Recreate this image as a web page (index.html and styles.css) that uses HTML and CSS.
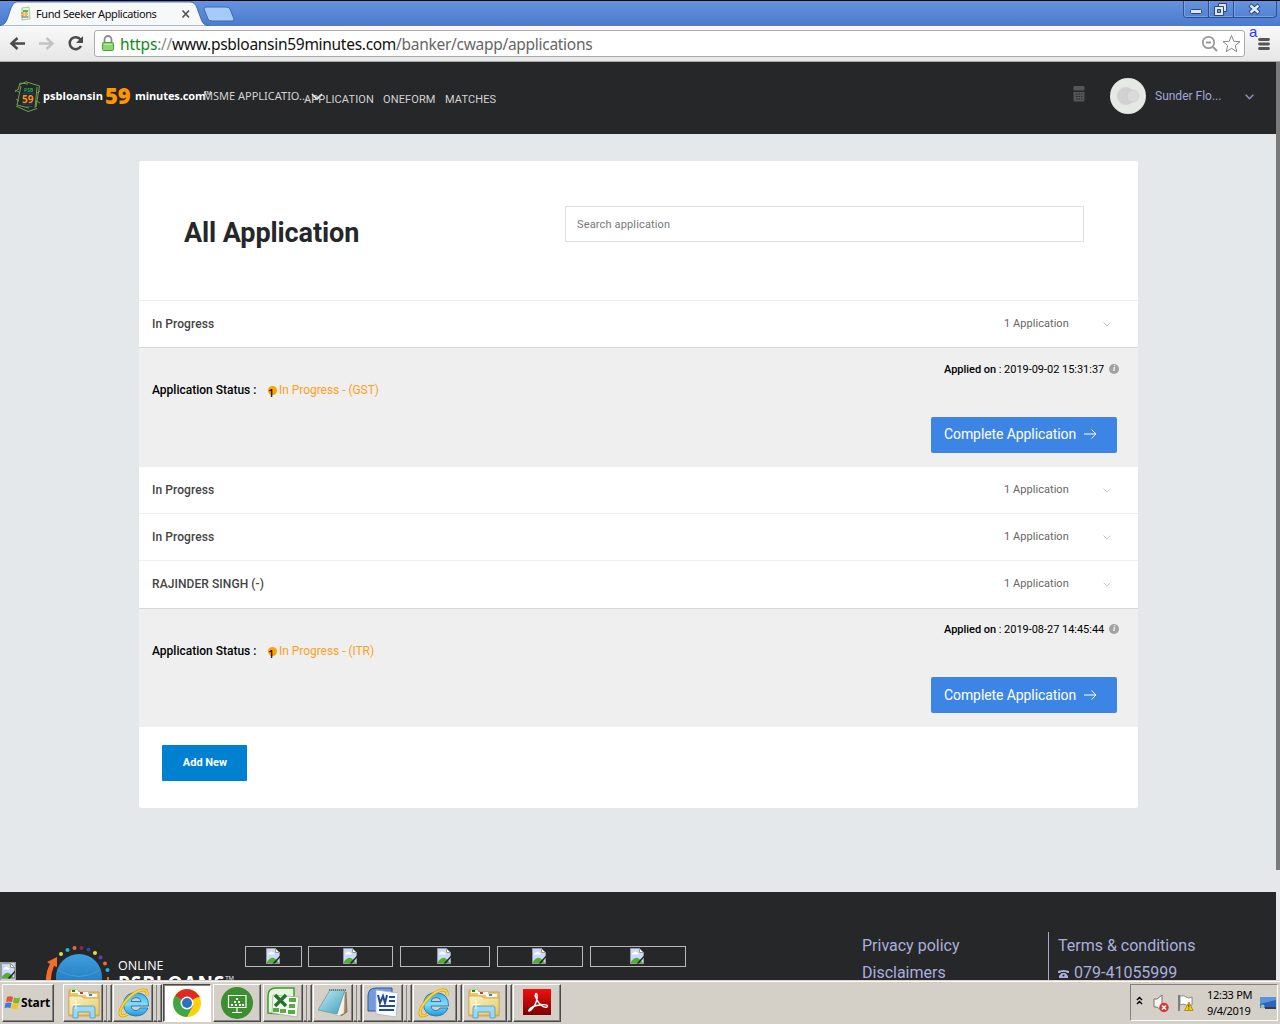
FILE: index.html
```html
<!DOCTYPE html>
<html lang="en">
<head>
<meta charset="utf-8">
<title>Fund Seeker Applications</title>
<link rel="stylesheet" href="styles.css">
</head>
<body>
<svg class="defs" width="0" height="0">
  <defs>
    <linearGradient id="folderFill" x1="0" y1="0" x2="1" y2="1"><stop offset="0" stop-color="#fdf3c0"/><stop offset="1" stop-color="#e9c868"/></linearGradient>
    <linearGradient id="ieFill" x1="0" y1="0" x2="0" y2="1"><stop offset="0" stop-color="#3faee6"/><stop offset=".5" stop-color="#82dcfb"/><stop offset="1" stop-color="#2494d8"/></linearGradient>
    <linearGradient id="padFill" x1="0" y1="0" x2="1" y2="1"><stop offset="0" stop-color="#c8eef4"/><stop offset="1" stop-color="#3c9ebc"/></linearGradient>
    <linearGradient id="redFill" x1="0" y1="0" x2="0" y2="1"><stop offset="0" stop-color="#f50f0f"/><stop offset="1" stop-color="#7c0000"/></linearGradient>
    <linearGradient id="globeFill" x1="0" y1="0" x2="0" y2="1"><stop offset="0" stop-color="#3d9fe0"/><stop offset="1" stop-color="#1b68ac"/></linearGradient>
    <symbol id="broken" viewBox="0 0 14 16">
      <path d="M.5.5H9.500L13.500 4.500V15.500H.5z" fill="#c9dafa" stroke="#9a9a9a"/>
      <path d="M9.500.5V4.500H13.500z" fill="#fff" stroke="#9a9a9a"/>
      <path d="M2 6.500q0-2 2-2 1-2 3 0 2 0 1.500 2z" fill="#fff"/>
      <path d="M1 15v-1.500q5-6.500 9-2l3 3.500z" fill="#54ad35"/>
      <path d="M14 7.500V9.500L9 15.500H6.500z" fill="#252729"/>
    </symbol>
    <symbol id="explorer" viewBox="0 0 34 32">
      <path d="M2 4q0-1 1-1h8l2 2h19v24H2z" fill="#eac66d" stroke="#c39a3b" stroke-width=".7"/>
      <path d="M4 3h7v3H4z" fill="#fff"/><path d="M5 3h3v2H5z" fill="#0b9a20"/>
      <path d="M11 5h10v3H11z" fill="#fff"/><path d="M13 5h3v2h-3z" fill="#d63a1e"/>
      <path d="M19 7h11v3H19z" fill="#fff"/><path d="M22 7h3v2h-3z" fill="#138bea"/>
      <path d="M2 9h12l3 2h15v17H2z" fill="url(#folderFill)" stroke="#c8a040" stroke-width=".7"/>
      <path d="M6 31V21q0-2 2-2h18q2 0 2 2v10h-5v-6H11v6z" fill="#9ed8f0" stroke="#489bc3" stroke-width=".8"/>
      <path d="M9 13v9M4.500 17.500h9" stroke="#fff" stroke-width=".9"/>
    </symbol>
    <symbol id="ie" viewBox="0 0 34 32">
      <path d="M31 21q-3 8-12.500 8Q7 28 6.500 17.500 7 6 19 5.500 32 6.500 31.500 19H14q.5 4.500 5 4.500 3 0 4-2.500zM14 14.500h10q-.5-4-5-4T14 14.500z" fill="url(#ieFill)" stroke="#1876b8" stroke-width=".9" fill-rule="evenodd"/>
      <path d="M30 8.500Q31 1 23 3.500C14 6 3 19 3 26q0 5 8 1" fill="none" stroke="#c89005" stroke-width="2.800"/>
      <path d="M30 8.500Q31 1 23 3.500C14 6 3 19 3 26q0 5 8 1" fill="none" stroke="#ffd62e" stroke-width="1.900"/>
    </symbol>
  </defs>
</svg>

<div class="screen">
  <div class="titlebar">
    <svg class="tabs" width="240" height="26" viewBox="0 0 240 26">
      <path d="M0 25.500C6 25 7 20 10 11Q12.500 2 17 2H190Q195 2 197 8L201 19Q203 25.500 209 26H0z" fill="#f7f8f8" stroke="#345da7" stroke-width=".8"/>
      <path d="M204 9q-.5-2 2-2h20q3 0 4 2l4 10q.8 2-2 2h-20q-3 0-4-2z" fill="#a6cbf7" stroke="#3c69b5"/>
      <path d="M22 8l7-1 1 12-8 1z" fill="#edf4dc" stroke="#93b36b" stroke-width=".7"/>
      <path d="M23 11h5" stroke="#25a05b" stroke-width="1.500"/><path d="M21.500 17h7" stroke="#4661ab"/>
      <path d="M182.500 10.500l6.500 7m0-7l-6.500 7" stroke="#555" stroke-width="1.700"/>
    </svg>
    <span class="fav-num">59</span>
    <span class="tab-title">Fund Seeker Applications</span>
    <svg class="win-controls" width="94" height="20" viewBox="0 0 94 20">
      <path d="M.5 0v14q0 2.500 3 2.500h87q3 0 3-2.500V0M25.500 0v16M50.500 0v16" fill="none" stroke="#2f5090"/>
      <path d="M1.500 0v14q0 1.500 2 1.500H24.500M26.500 0v15.500H49.500M51.500 0v15.500H90" fill="none" stroke="#86aae4" stroke-width=".7"/>
      <rect x="7.500" y="8.500" width="11" height="4" rx="1" fill="#dce7f7" stroke="#2b4778"/>
      <path d="M35.500 2.500h8v8h-8z" fill="#dce7f7" stroke="#2b4778"/>
      <path d="M31.500 5.500h9v9h-9z" fill="#dce7f7" stroke="#2b4778"/><path d="M34.500 8.500h3v3h-3z" fill="#6e98da" stroke="#2b4778"/>
      <path d="M67 4l9 8m0-8l-9 8" stroke="#2b4778" stroke-width="4.400"/><path d="M67.500 4.500l8 7m0-7l-8 7" stroke="#e4edf9" stroke-width="2.400"/>
    </svg>
  </div>

  <div class="toolbar">
    <svg class="nav-icons" width="94" height="34" viewBox="0 0 94 34">
      <path d="M25 17.500H12M17.500 12l-6 5.500 6 5.500" fill="none" stroke="#4b4b4b" stroke-width="2.500"/>
      <path d="M39 17.500h13M46.500 12l6 5.500-6 5.500" fill="none" stroke="#c4c4c4" stroke-width="2.500"/>
      <path d="M80.500 13.500a6 6 0 1 0 .5 6.500" fill="none" stroke="#4b4b4b" stroke-width="2.500"/><path d="M83 10v7h-7z" fill="#4b4b4b"/>
    </svg>
    <div class="address">
      <svg width="12" height="17" viewBox="0 0 12 17"><path d="M2.500 8V4.500a3.500 3.500 0 0 1 7 0V8" fill="none" stroke="#8b8b8b" stroke-width="1.800"/><rect x=".5" y="7.500" width="11" height="8" rx="1" fill="#8bd76d" stroke="#4aa13a"/><path d="M2 9.500h8" stroke="#b8efa1"/></svg>
      <span class="url"><b>https</b><i>://</i>www.psbloansin59minutes.com<em>/banker/cwapp/applications</em></span>
      <svg width="40" height="20" viewBox="0 0 40 20"><circle cx="7.500" cy="8.500" r="5.700" fill="none" stroke="#999" stroke-width="1.700"/><path d="M5 8.500h5M12 13l4 4" stroke="#999" stroke-width="2"/><path d="M30.500 1.500l2.300 5.800 6.200.3-4.700 4 1.500 6.100-5.300-3.400-5.300 3.400 1.500-6.100-4.700-4 6.200-.3z" fill="#fff" stroke="#888"/></svg>
    </div>
    <svg class="menu" width="14" height="14" viewBox="0 0 14 14"><path d="M2.500 2.500h9M2.500 7h9M2.500 11.500h9" stroke="#555" stroke-width="2.800" stroke-linecap="round"/></svg>
    <span class="ext-a">a</span>
  </div>

  <div class="viewport">
    <div class="page">
      <header class="site-header">
        <svg class="brand-mark" width="27" height="32" viewBox="0 0 27 32">
          <path d="M5 4L12 .8 25.500 5 22 26M4 9l2-7 8 1M2 25l12 5.500 9-3M7 5L3 24l12 3M23 6l-2 21" fill="none" stroke="#6fa350"/>
          <path d="M1 9l4 2M1 11l3-3M22 20l4 2M23 12l3-2M2 18l3 2" stroke="#83a969" stroke-width=".8"/>
          <path d="M8 12.500h12M8 23h11" stroke="#27357c" stroke-width="1.500"/><path d="M11 25.500h7" stroke="#1b693a"/>
        </svg>
        <span class="mark-psb">PSB</span><span class="mark-num">59</span>
        <span class="brand"><span class="b1">psbloansin</span><span class="b59">59</span><span class="b2">minutes.com</span></span>
        <nav class="main-nav">
          <span class="tm">TM</span>
          <span class="msme">MSME APPLICATIO...</span>
          <svg class="nav-caret" width="12" height="8" viewBox="0 0 12 8"><path d="M1 1l5 5 5-5" fill="none" stroke="#fff" stroke-width="1.600"/></svg>
          <span class="n1">APPLICATION</span><span class="n2">ONEFORM</span><span class="n3">MATCHES</span>
        </nav>
        <svg class="calc" width="12" height="16" viewBox="0 0 12 16"><rect width="11" height="4.500" x=".5" rx="1" fill="#555657"/><path d="M.5 6h11v8q0 1.500-1.500 1.500H2Q.5 15.500.5 14z" fill="#555657"/><path d="M3 8h1.500M5.500 8H7M8 8h1.500M3 10.500h1.500M5.500 10.500H7M8 10.500h1.500M3 13h1.500M5.500 13H7M8 13h1.500" stroke="#252729" stroke-width="1.200"/></svg>
        <svg class="avatar" width="36" height="36" viewBox="0 0 36 36"><circle cx="18" cy="18" r="18" fill="#e6e8e6"/><circle cx="16" cy="18" r="9" fill="#d1d1d1"/><circle cx="23" cy="18" r="6" fill="#dadada" stroke="#c8c8c8" stroke-width=".6"/></svg>
        <span class="user">Sunder Flo...</span>
        <svg class="user-caret" width="9" height="6" viewBox="0 0 9 6"><path d="M.7.700l3.800 4 3.800-4" fill="none" stroke="#9090b8" stroke-width="1.500"/></svg>
      </header>

      <main class="content">
        <section class="card">
          <div class="card-head">
            <h1>All Application</h1>
            <div class="search">Search application</div>
          </div>
          <div class="row first"><strong>In Progress</strong><span class="count">1 Application</span><svg width="8" height="5" viewBox="0 0 8 5"><path d="M.5.500L4 4 7.500.500" fill="none" stroke="#c4c4c4"/></svg></div>
          <div class="detail">
            <div class="status"><strong>Application Status :</strong><span class="dot"><span>1</span></span><span class="state">In Progress - (GST)</span></div>
            <div class="side">
              <div class="applied"><strong>Applied on</strong> : 2019-09-02 15:31:37<span class="info">i</span></div>
              <div class="complete"><span>Complete Application</span><svg width="13" height="12" viewBox="0 0 13 12"><path d="M0 6h12M7.500 1.500L12 6 7.500 10.500" fill="none" stroke="#fff"/></svg></div>
            </div>
          </div>
          <div class="row next"><strong>In Progress</strong><span class="count">1 Application</span><svg width="8" height="5" viewBox="0 0 8 5"><path d="M.5.500L4 4 7.500.500" fill="none" stroke="#ccc"/></svg></div>
          <div class="row lined"><strong>In Progress</strong><span class="count">1 Application</span><svg width="8" height="5" viewBox="0 0 8 5"><path d="M.5.500L4 4 7.500.500" fill="none" stroke="#ccc"/></svg></div>
          <div class="row lined"><strong>RAJINDER SINGH (-)</strong><span class="count">1 Application</span><svg width="8" height="5" viewBox="0 0 8 5"><path d="M.5.500L4 4 7.500.500" fill="none" stroke="#ccc"/></svg></div>
          <div class="detail second">
            <div class="status"><strong>Application Status :</strong><span class="dot"><span>1</span></span><span class="state">In Progress - (ITR)</span></div>
            <div class="side">
              <div class="applied"><strong>Applied on</strong> : 2019-08-27 14:45:44<span class="info">i</span></div>
              <div class="complete"><span>Complete Application</span><svg width="13" height="12" viewBox="0 0 13 12"><path d="M0 6h12M7.500 1.500L12 6 7.500 10.500" fill="none" stroke="#fff"/></svg></div>
            </div>
          </div>
          <div class="card-foot"><div class="add">Add New</div></div>
        </section>
      </main>

      <footer class="site-footer">
        <span class="edge-img"><svg width="14" height="16"><use href="#broken"/></svg></span>
        <svg class="globe" width="72" height="40" viewBox="0 0 72 40">
          <circle cx="36" cy="31" r="23" fill="url(#globeFill)"/><path d="M15 24q21 13 42 0" fill="none" stroke="#4a9ad8"/>
          <path d="M3 40Q2 27 7 18L4 16 14 11v10l-3-1Q7 29 8 40z" fill="#f36c2c"/>
          <g><circle cx="18" cy="8" r="2" fill="#d9e04b"/><circle cx="24.500" cy="4" r="2" fill="#26b3e8"/><circle cx="31.500" cy="2" r="2" fill="#f06b2e"/><circle cx="38.500" cy="2" r="2" fill="#98224f"/><circle cx="45.500" cy="3.500" r="2" fill="#2250a5"/><circle cx="52" cy="7" r="2" fill="#fadb20"/><circle cx="57.500" cy="11.500" r="2" fill="#6b3ba0"/><circle cx="62" cy="17.500" r="2" fill="#f06b2e"/><circle cx="64.500" cy="24" r="2" fill="#26b3e8"/><path d="M64 31h2v4h-2z" fill="#f06b2e"/></g>
        </svg>
        <div class="online"><span>ONLINE</span><b>PSBLOANS<sup>TM</sup></b></div>
        <div class="partners">
          <span class="p1"><svg width="14" height="16"><use href="#broken"/></svg></span>
          <span class="p2"><svg width="14" height="16"><use href="#broken"/></svg></span>
          <span class="p3"><svg width="14" height="16"><use href="#broken"/></svg></span>
          <span class="p4"><svg width="14" height="16"><use href="#broken"/></svg></span>
          <span class="p5"><svg width="14" height="16"><use href="#broken"/></svg></span>
        </div>
        <div class="links"><span>Privacy policy</span><span>Disclaimers</span></div>
        <div class="links contact"><span>Terms &amp; conditions</span><span><svg width="11" height="8" viewBox="0 0 11 8"><path d="M0 3V1.500Q1 0 5.500 0T11 1.500V3H8.500V2h-6v1zM3.500 3h4L10 6v2H1V6z" fill="#a9b0dc"/><circle cx="5.500" cy="5.500" r="1" fill="#252729"/></svg>079-41055999</span></div>
      </footer>
    </div>
    <div class="scrollbar"><div class="thumb"></div></div>
  </div>

  <div class="taskbar">
    <div class="start"><svg width="16" height="16" viewBox="0 0 16 16"><path d="M3 2q3-1.500 6 0L8 7Q5 6 2 7z" fill="#e5562a"/><path d="M10 2.500q3 1.500 6 0L15 8q-3 1-6-.5z" fill="#76b82a"/><path d="M1.500 8q3-1 6 0l-1 5q-3-1-6 0z" fill="#3b7dd8"/><path d="M8.500 8.500q3 1.500 6 0l-1 5q-3 1.500-6 0z" fill="#fbc21d"/></svg><span>Start</span></div>
    <div class="task stack"><svg width="34" height="32"><use href="#explorer"/></svg><i></i><i></i></div>
    <div class="task stack"><svg width="34" height="32"><use href="#ie"/></svg><i></i><i></i></div>
    <div class="task active"><svg width="30" height="30" viewBox="0 0 30 30"><circle cx="15" cy="15" r="14" fill="#fdd008"/><path d="M15 15L2.900 8A14 14 0 0 1 27.100 8z" fill="#dc2b20"/><path d="M15 15L2.900 8A14 14 0 0 0 15 29l6-11z" fill="#3fa648"/><path d="M15 8.500H27.400" stroke="#dc2b20" stroke-width="1.500"/><circle cx="15" cy="15" r="6.500" fill="#fff"/><circle cx="15" cy="15" r="5" fill="#2e70bd"/></svg></div>
    <div class="task"><svg width="32" height="32" viewBox="0 0 32 32"><circle cx="16" cy="16" r="16" fill="#3c8f31"/><path d="M7.500 8.500h17.500v12H7.500zM16 20.500v5M11 25.500h10" fill="none" stroke="#fff" stroke-width="1.200"/><path d="M15 11h2v2h-2zM13 14h2v2h-2zM17 14h2v2h-2zM10 17h2v2h-2zM14 17h2v2h-2zM18 17h2v2h-2zM21 17h2v2h-2z" fill="#fff"/></svg></div>
    <div class="task stack"><svg width="34" height="32" viewBox="0 0 34 32"><path d="M1 9q0-8 8-8h18v24q-14 3-26 1z" fill="#e8f5dd" stroke="#3e9c34" stroke-width="1.500"/><path d="M6 8l26 2-2 20-25-4z" fill="#f7fbf4" stroke="#91b586" stroke-width=".7"/><path d="M22 11h7v4h-7zM22 17h6v4h-6zM21 23h7v4h-7zM13 22h6v4h-6zM6 21h6v4H6z" fill="#5ca946"/><path d="M8 8l11 11M19 8L8 19" stroke="#227428" stroke-width="3.500"/></svg><i></i><i></i></div>
    <div class="task stack"><svg width="34" height="32" viewBox="0 0 34 32"><path d="M29 5l1 20-6 4z" fill="#a98553" stroke="#7f6039" stroke-width=".7"/><path d="M28 4l-1 22-5 3-6-2z" fill="#f3f1ea" stroke="#a9a79d" stroke-width=".6"/><path d="M13 3h15L20 27 1 23z" fill="url(#padFill)" stroke="#5b95a4" stroke-width=".7"/><path d="M12 3h17" stroke="#777" stroke-width="2" stroke-dasharray="1 1"/></svg><i></i><i></i></div>
    <div class="task stack"><svg width="34" height="32" viewBox="0 0 34 32"><path d="M1 9q0-8 8-8h16v23H1z" fill="#729bda" stroke="#2d58a0"/><path d="M9 3l22 3-2 24-20-3z" fill="#fafcff" stroke="#a5b7d6" stroke-width=".8"/><path d="M11 8l2 8 3-7 2 7 2-8" fill="none" stroke="#26489b" stroke-width="2"/><path d="M22 10h6M22 14h6M12 19h16M12 23h15" stroke="#26489b" stroke-width="2"/></svg><i></i><i></i></div>
    <div class="task stack double"><svg width="34" height="32"><use href="#ie"/></svg><i></i></div>
    <div class="task stack double"><svg width="34" height="32"><use href="#explorer"/></svg><i></i></div>
    <div class="task"><svg class="pdf" width="28" height="26" viewBox="0 0 28 26"><path d="M0 0h28v26H0z" fill="url(#redFill)"/><path d="M6 22c5-2 9-11 8-16-.5-3-3-1-1 3 3 7 8 10 11 9 2-2-2-3-7-2-5 0-10 3-11 5q-.5 1 0 1z" fill="none" stroke="#fff" stroke-width="1.400"/></svg></div>
    <div class="tray">
      <svg width="52" height="28" viewBox="0 0 52 28"><path d="M0 11l2.500-2.500L5 11M0 15l2.500-2.500L5 15" fill="none" stroke="#000" stroke-width="1.500"/><path d="M17 10h3l5-4v16l-5-4h-3z" fill="#f5f5f5" stroke="#777"/><circle cx="27" cy="18.500" r="4.700" fill="#d93630"/><path d="M25 16.500l4 4m0-4l-4 4" stroke="#fff" stroke-width="1.500"/><path d="M42 6v16" stroke="#777" stroke-width="1.800"/><path d="M43 7q4-1 6 1t6 0v8q-4 2-6 0t-6 0z" fill="#fff" stroke="#777" stroke-width=".8"/><path d="M47.500 21.500L52 13l4 8.500z" fill="#f4d20c" stroke="#b39300"/><path d="M51.800 15.500v3M51.800 19.500v1" stroke="#333"/></svg>
      <div class="clock"><span>12:33 PM</span><span>9/4/2019</span></div>
      <svg class="desk" width="16" height="14" viewBox="0 0 16 14"><path d="M0 1h16v11H0z" fill="#2b65bd"/><path d="M0 1h16v3L0 8z" fill="#5c93dc"/><path d="M5 11h11v2H5z" fill="#3b3f45"/><circle cx="2.500" cy="10.500" r="2" fill="#7ed0f4"/><circle cx="2.500" cy="10.500" r="1" fill="#f19a27"/></svg>
    </div>
  </div>
</div>
</body>
</html>
```
FILE: styles.css
```css
* { box-sizing: border-box; }
body { margin: 0; font-family: Roboto, "Liberation Sans", sans-serif; }
.defs { position: absolute; }
svg { display: block; flex: none; overflow: visible; }
span, h1, .add, .search { white-space: nowrap; }
.screen { width: 1280px; height: 1024px; display: flex; flex-direction: column; overflow: hidden; }

/* Browser frame */
.titlebar { position: relative; flex: none; height: 26px; background: linear-gradient(#6494df, #4b79cc); border-top: 1px solid #000; display: flex; justify-content: space-between; padding-right: 3px; }
.titlebar svg { margin-top: -1px; }
.titlebar .win-controls { margin-top: 0; }
.tab-title { position: absolute; left: 36px; top: 5px; font: 11px/16px "Noto Sans", sans-serif; color: #111; letter-spacing: -.4px; }
.fav-num { position: absolute; left: 21px; top: 10px; font: bold 6px/6px "Open Sans", sans-serif; color: #f5930c; }
.toolbar { position: relative; flex: none; height: 36px; background: linear-gradient(#f9f9f9, #e6e6e6); border-bottom: 1px solid #a9aaaa; display: flex; align-items: flex-start; }
.address { margin-top: 4px; width: 1151px; height: 27px; border: 1px solid #ababab; border-radius: 3px; background: #fff; display: flex; align-items: center; padding: 0 3px 0 7px; }
.url { flex: 1; margin-left: 6px; padding-top: 1px; font: 15.500px/26px "Noto Sans", sans-serif; letter-spacing: -.29px; color: #111; }
.url b { font-weight: 400; color: #118a12; letter-spacing: -.1px; }
.url i, .url em { font-style: normal; color: #8a8a8a; }
.url em { color: #666; }
.menu { margin: 11px 0 0 12px; }
.ext-a { position: absolute; left: 1249px; top: -3px; font: 15px/18px "Liberation Sans", sans-serif; color: #1f36ff; }

/* Web page */
.viewport { flex: none; height: 918px; display: flex; overflow: hidden; }
.page { width: 1276px; background: #e4e8eb; }
.scrollbar { width: 4px; background: #e4e8eb; }
.thumb { height: 808px; background: #7b7b7b; }
.site-header { position: relative; height: 72px; background: #252729; display: flex; align-items: flex-start; }
.brand-mark { margin: 19px 0 0 14px; }
.mark-psb, .mark-num { position: absolute; font: bold 5px/6px "Open Sans", sans-serif; color: #14af3c; left: 24px; top: 25px; }
.mark-num { font-size: 10px; line-height: 10px; color: #ff9500; left: 22px; top: 32px; }
.brand { display: flex; align-items: center; margin: 19px 0 0 2px; width: 165px; height: 30px; font-family: "Open Sans", sans-serif; color: #fff; font-size: 11px; font-weight: 700; line-height: 30px; }
.b1 { width: 62px; letter-spacing: .05px; }
.b59 { width: 30px; padding-bottom: 2px; font-size: 22px; font-weight: 800; color: #ff9500; line-height: 30px; letter-spacing: -.2px; }
.b2 { letter-spacing: -.1px; }
.main-nav { position: relative; width: 300px; height: 72px; color: #d3d3d3; font-size: 11px; line-height: 16px; }
.main-nav > * { position: absolute; top: 29px; }
.main-nav .tm { left: -4px; top: 28px; font: 5px/6px "Open Sans", sans-serif; color: #fff; }
.main-nav .msme { top: 26px; left: -5px; font-family: "Noto Sans", sans-serif; }
.main-nav .nav-caret { left: 103px; top: 31px; }
.main-nav .n1, .main-nav .n2, .main-nav .n3 { top: 30px; letter-spacing: .12px; }
.n1 { left: 96px; } .n2 { left: 175px; } .n3 { left: 237px; }
.calc { margin: 24px 0 0 auto; }
.avatar { margin: 16px 0 0 25px; }
.user { width: 90px; margin: 26px 0 0 9px; font-size: 12px; line-height: 16px; color: #a1a8da; }
.user-caret { margin: 32px 22px 0 0; }

.content { height: 758px; padding: 27px 0 0 139px; }
.card { width: 999px; height: 647px; background: #fff; border-radius: 3px; overflow: hidden; }
.card-head { height: 139px; padding: 45px 54px 0 45px; display: flex; justify-content: space-between; }
h1 { margin: 9px 0 0; font-size: 27px; line-height: 36px; font-weight: 700; color: #252729; letter-spacing: -.1px; }
.search { width: 519px; height: 36px; border: 1px solid #dedfe0; padding: 1px 0 0 11px; font-size: 11px; line-height: 34px; color: #777; letter-spacing: .15px; }
.row { height: 47px; display: flex; align-items: center; padding: 0 27px 0 13px; font-size: 12px; color: #444; }
.row strong { flex: 1; font-weight: 500; letter-spacing: .08px; }
.row.lined, .row.first { border-top: 1px solid #eee; }
.row.next { height: 46px; }
.count { font-size: 11px; width: 99px; padding-bottom: 2px; color: #666; letter-spacing: .05px; }
.detail { height: 120px; background: #efefef; border-top: 1px solid #d5d7d8; display: flex; justify-content: space-between; padding: 14px 19px 0 13px; }
.detail.second { height: 119px; margin: 1px 0 0; padding-top: 13px; }
.status { margin-top: 20px; height: 17px; display: flex; font-size: 12px; line-height: 17px; color: #000; }
.second .status { margin-top: 21px; }
.status strong { width: 116px; font-weight: 500; }
.dot { position: relative; width: 9px; height: 9px; border-radius: 5px; background: #ffa000; margin: 4px 2px 0 0; }
.dot span { position: absolute; left: 0; top: -1px; font: 500 11px/16px "Noto Sans", sans-serif; }
.state { color: #ffa01c; letter-spacing: -.04px; }
.side { width: 188px; }
.applied { margin-left: 13px; font-size: 11px; line-height: 16px; color: #000; white-space: nowrap; letter-spacing: -.03px; }
.applied strong { font-weight: 500; }
.info { display: inline-block; width: 10px; height: 10px; margin-left: 5px; border-radius: 5px; background: #a2a2a2; color: #fff; font: italic bold 8px/10px "Liberation Serif", serif; text-align: center; vertical-align: 2px; }
.complete { width: 186px; height: 36px; margin-top: 39px; border-radius: 2px; background: #3d85e4; color: #fff; font-size: 14px; display: flex; align-items: center; gap: 8px; padding: 0 0 1px 13px; letter-spacing: -.09px; }
.detail:not(.second) .complete { padding-bottom: 2px; }
.card-foot { padding: 18px 23px; }
.add { width: 85px; height: 36px; background: #0080d0; border-radius: 1px; color: #fff; font-size: 11px; font-weight: 700; line-height: 35px; text-align: center; padding-left: 1px; }

.site-footer { height: 88px; background: #252729; display: flex; align-items: flex-start; overflow: hidden; }
.edge-img { width: 16px; height: 19px; margin-top: 70px; border: 1px solid #999; background: #cfcfcf; }
.globe { margin: 54px 0 0 27px; }
.online { width: 120px; margin: 64px 0 0 3px; display: flex; flex-direction: column; font: 12.500px/19px "Open Sans", sans-serif; color: #fff; }
.online b { font-size: 19px; line-height: 24px; margin-top: -4px; letter-spacing: .9px; white-space: nowrap; }
.online sup { font-size: 6px; font-weight: 400; line-height: 0; letter-spacing: 0; vertical-align: 10px; }
.partners { display: flex; margin: 54px 0 0 7px; width: 617px; }
.partners span { height: 21px; border: 1px solid #b9b9b9; display: flex; align-items: center; justify-content: center; padding: 0 2px 1px 0; }
.p1 { width: 57px; } .p2 { width: 85px; margin-left: 6px; } .p3 { width: 90px; margin-left: 7px; } .p4 { width: 86px; margin-left: 7px; } .p5 { width: 96px; margin-left: 7px; }
.links { flex: none; width: 186px; margin-top: 40px; display: flex; flex-direction: column; font-size: 16px; line-height: 27px; color: #a9b0dc; height: 60px; }
.contact { border-left: 1px solid #a3aad8; padding-left: 9px; }
.contact svg { display: inline-block; margin-right: 5px; }

/* Desktop taskbar */
.taskbar { flex: none; height: 44px; background: #d4cfc7; border-top: 1px solid #d4cfc7; box-shadow: inset 0 1px #fff; padding: 3px 0 0 2px; display: flex; }
.start, .task { height: 38px; border: 1px solid; border-color: #fff #484848 #484848 #fff; box-shadow: inset -1px -1px #858585; display: flex; align-items: center; }
.start { width: 52px; margin-right: 9px; padding-left: 1px; gap: 1px; font: bold 12px/20px "Noto Sans", sans-serif; letter-spacing: -.1px; }
.task { position: relative; width: 48px; margin-right: 2px; justify-content: center; flex: none; }
.stack { width: 40px; margin-right: 10px; justify-content: flex-start; padding-left: 3px; }
.stack i { position: absolute; top: -1px; left: 39px; width: 5px; height: 38px; border: 1px solid; border-color: #fff #484848 #484848 #d4cfc7; box-shadow: inset -1px -1px #858585; }
.stack i + i { left: 43px; }
.double { width: 44px; margin-right: 6px; }
.double i { left: 43px; }
.active { background: #fff; border-color: #484848 #fff #fff #484848; box-shadow: inset 1px 1px #858585; }
.pdf { margin-bottom: 2px; }
.tray { margin-left: auto; width: 148px; height: 37px; border: 1px solid; border-color: #808080 #fff #fff #808080; display: flex; align-items: center; padding-left: 6px; margin-right: 2px; }
.clock { display: flex; flex-direction: column; width: 53px; margin-left: 18px; font: 11px/16px "Noto Sans", sans-serif; letter-spacing: -.3px; }
```
